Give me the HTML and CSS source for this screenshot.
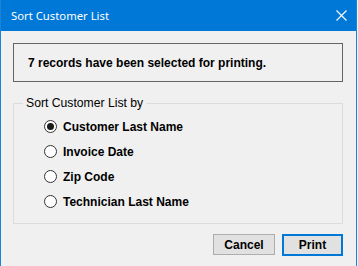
FILE: index.html
```html
<!DOCTYPE html>
<html lang="en">

<head>
    <meta charset="UTF-8">
    <title>Sort Customer List</title>
    <link rel="stylesheet" href="styles.css">
</head>

<body>
    <div class="window">
        <div class="titlebar">
            <span class="title">Sort Customer List</span>
            <button class="close-button" aria-label="Close">
                <svg width="11" height="11" viewBox="0 0 11 11">
                    <path d="M0.5 0.5 L10.5 10.5 M10.5 0.5 L0.5 10.5" stroke="#fff" stroke-width="1.1" fill="none"/>
                </svg>
            </button>
        </div>
        <div class="content">
            <div class="message">7 records have been selected for printing.</div>

            <fieldset class="sort-group">
                <legend>Sort Customer List by</legend>
                <div class="options">
                    <label class="option"><input type="radio" name="sort" checked> Customer Last Name</label>
                    <label class="option"><input type="radio" name="sort"> Invoice Date</label>
                    <label class="option"><input type="radio" name="sort"> Zip Code</label>
                    <label class="option"><input type="radio" name="sort"> Technician Last Name</label>
                </div>
            </fieldset>

            <div class="buttons">
                <button class="btn">Cancel</button>
                <button class="btn btn-default">Print</button>
            </div>
        </div>
    </div>
</body>

</html>
```

FILE: styles.css
```css
body {
    margin: 0;
    padding: 0;
    background-color: #f0f0f0;
    font-family: 'Liberation Sans', Arial, sans-serif;
}

.window {
    width: 357px;
    height: 266px;
    box-sizing: border-box;
    border-left: 1px solid #1883d7;
    border-right: 1px solid #1883d7;
    background-color: #f0f0f0;
}

.titlebar {
    height: 31px;
    background-color: #0078d7;
    display: flex;
    align-items: center;
    justify-content: space-between;
    padding-left: 10px;
}

.title {
    color: #fff;
    font-family: 'Noto Sans', sans-serif;
    font-size: 11.3px;
}

.close-button {
    width: 30px;
    height: 31px;
    border: none;
    background: transparent;
    padding: 0;
    display: flex;
    align-items: center;
    justify-content: center;
}

.content {
    padding: 12px 13px 0 12px;
}

.message {
    height: 37px;
    border: 1px solid #646464;
    padding-left: 14px;
    display: flex;
    align-items: center;
    font-size: 12px;
    font-weight: bold;
    color: #000;
}

.sort-group {
    margin: 14px 0 0 0;
    padding: 0;
    height: 126px;
    border: 1px solid #dcdcdc;
}

.sort-group legend {
    padding: 0 3px;
    margin-left: 9px;
    font-size: 12.2px;
    color: #000;
}

.options {
    padding: 4px 0 0 30px;
}

.option {
    display: flex;
    align-items: center;
    height: 25px;
    font-size: 12px;
    font-weight: bold;
    color: #000;
}

.option input {
    appearance: none;
    width: 13px;
    height: 13px;
    margin: 0 6px 0 0;
    border: 1px solid #333;
    border-radius: 50%;
    background-color: #fff;
    display: flex;
    align-items: center;
    justify-content: center;
}

.option input:checked::after {
    content: '';
    width: 7px;
    height: 7px;
    border-radius: 50%;
    background-color: #1a1a1a;
}

.buttons {
    display: flex;
    justify-content: flex-end;
    gap: 7px;
    margin-top: 10px;
}

.btn {
    width: 62px;
    height: 21px;
    border: 1px solid #adadad;
    background-color: #e1e1e1;
    font-family: 'Liberation Sans', Arial, sans-serif;
    font-size: 12px;
    font-weight: bold;
    color: #000;
    padding: 0;
}

.btn-default {
    border: 2px solid #0078d7;
    height: 22px;
    width: 61px;
}
```
